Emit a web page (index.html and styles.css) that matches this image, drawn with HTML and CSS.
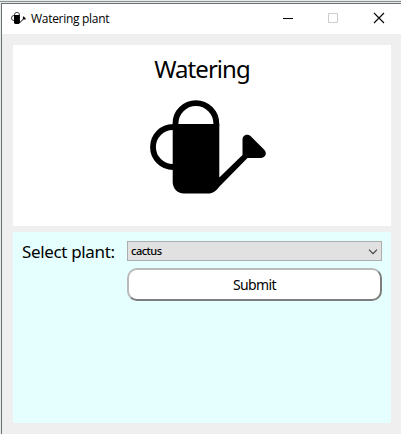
FILE: index.html
```html
<!DOCTYPE html>
<html lang="en">
<head>
<meta charset="utf-8">
<title>Watering plant</title>
<link rel="stylesheet" href="styles.css">
</head>
<body>
<svg class="defs" width="0" height="0" aria-hidden="true">
  <symbol id="can" viewBox="0 0 118 94">
    <path d="M26.5 26V23.5a20.4 20.4 0 0 1 40.8 0V26M24 27a20 20 0 0 0 0 40" fill="none" stroke="#000" stroke-width="5.8"/>
    <path d="M23.7 24H70.3V77.5L93.5 55V39.5C93.5 35 98.5 33.5 101.5 36L115.5 50C118.5 53.5 116 58 112 58H98.5L70 87C67 91 64 93.5 59 93.5H35C28 93.5 23.7 88 23.7 82Z"/>
  </symbol>
</svg>
<div class="window">
  <header class="titlebar">
    <svg class="app-icon"><use href="#can"/></svg>
    <span class="title">Watering plant</span>
    <svg class="controls" width="102" height="12" viewBox="0 0 102 12">
      <path d="M0 6.5H10" stroke="#000"/>
      <path d="M45.5 1.5h9v9h-9z" fill="none" stroke="#ccc"/>
      <path d="M91 1l10 10M101 1L91 11" stroke="#000" stroke-width="1.1"/>
    </svg>
  </header>
  <main class="content">
    <section class="hero">
      <h1>Watering</h1>
      <svg class="can"><use href="#can"/></svg>
    </section>
    <section class="form">
      <span class="label">Select plant:</span>
      <div class="select"><span>cactus</span>
        <svg width="10" height="6" viewBox="0 0 10 6"><path d="M1 .7l4 4 4-4" fill="none" stroke="#444" stroke-width="1.2"/></svg>
      </div>
      <button class="submit">Submit</button>
    </section>
  </main>
</div>
</body>
</html>
```
FILE: styles.css
```css
* { box-sizing: border-box; }
body {
  margin: 0;
  height: 434px;
  overflow: hidden;
  padding: 3px 0 0 1px;
  background: linear-gradient(#e5ebeb 0 1px, #8a9090 1px 2px, #e5ebeb 2px);
  color: #000;
}
.defs { position: absolute; }
.window {
  height: 431px;
  border: solid #6c7070;
  border-width: 1px 0 0 1px;
  background: #efefef;
}
.titlebar {
  display: flex;
  align-items: center;
  height: 30px;
  padding: 0 16px 0 9px;
  background: #fff;
}
.app-icon { width: 15px; height: 12px; margin-top: -3px; }
.title {
  margin-left: 5px;
  font: 12px/16px "Open Sans", sans-serif;
  letter-spacing: -.3px;
}
.controls { margin: -3px 0 0 auto; }
.content {
  display: grid;
  grid-template-rows: 181px 191px;
  gap: 6px;
  padding: 11px 10px 0 11px;
}
.hero {
  display: flex;
  flex-direction: column;
  align-items: center;
  background: #fff;
}
h1 {
  margin: 9px 0 0;
  font: 24px/30px "Noto Sans", sans-serif;
  letter-spacing: -.95px;
}
.can { width: 118px; height: 94px; margin: 16px 0 0 11px; }
.form {
  display: grid;
  grid-template-columns: 105px 255px;
  grid-template-rows: 20px 33px;
  gap: 7px 0;
  align-content: start;
  padding: 9px;
  background: #e5ffff;
}
.label {
  font: 17px/22px "Noto Sans", sans-serif;
  white-space: nowrap;
  letter-spacing: -.35px;
}
.select {
  display: flex;
  align-items: center;
  justify-content: space-between;
  padding: 0 3px;
  border: 1px solid #adadad;
  background: #e1e1e1;
  font: 500 11px/16px "Noto Sans", sans-serif;
  letter-spacing: -.5px;
}
.select svg { margin-top: 2px; }
.submit {
  grid-column: 2;
  padding: 0;
  border: 2px solid;
  border-color: #bababa #7d7d7d #7d7d7d #bababa;
  border-radius: 10px;
  background: #fff;
  color: #000;
  font: 14px/20px "Noto Sans", sans-serif;
  letter-spacing: -.6px;
}
```
